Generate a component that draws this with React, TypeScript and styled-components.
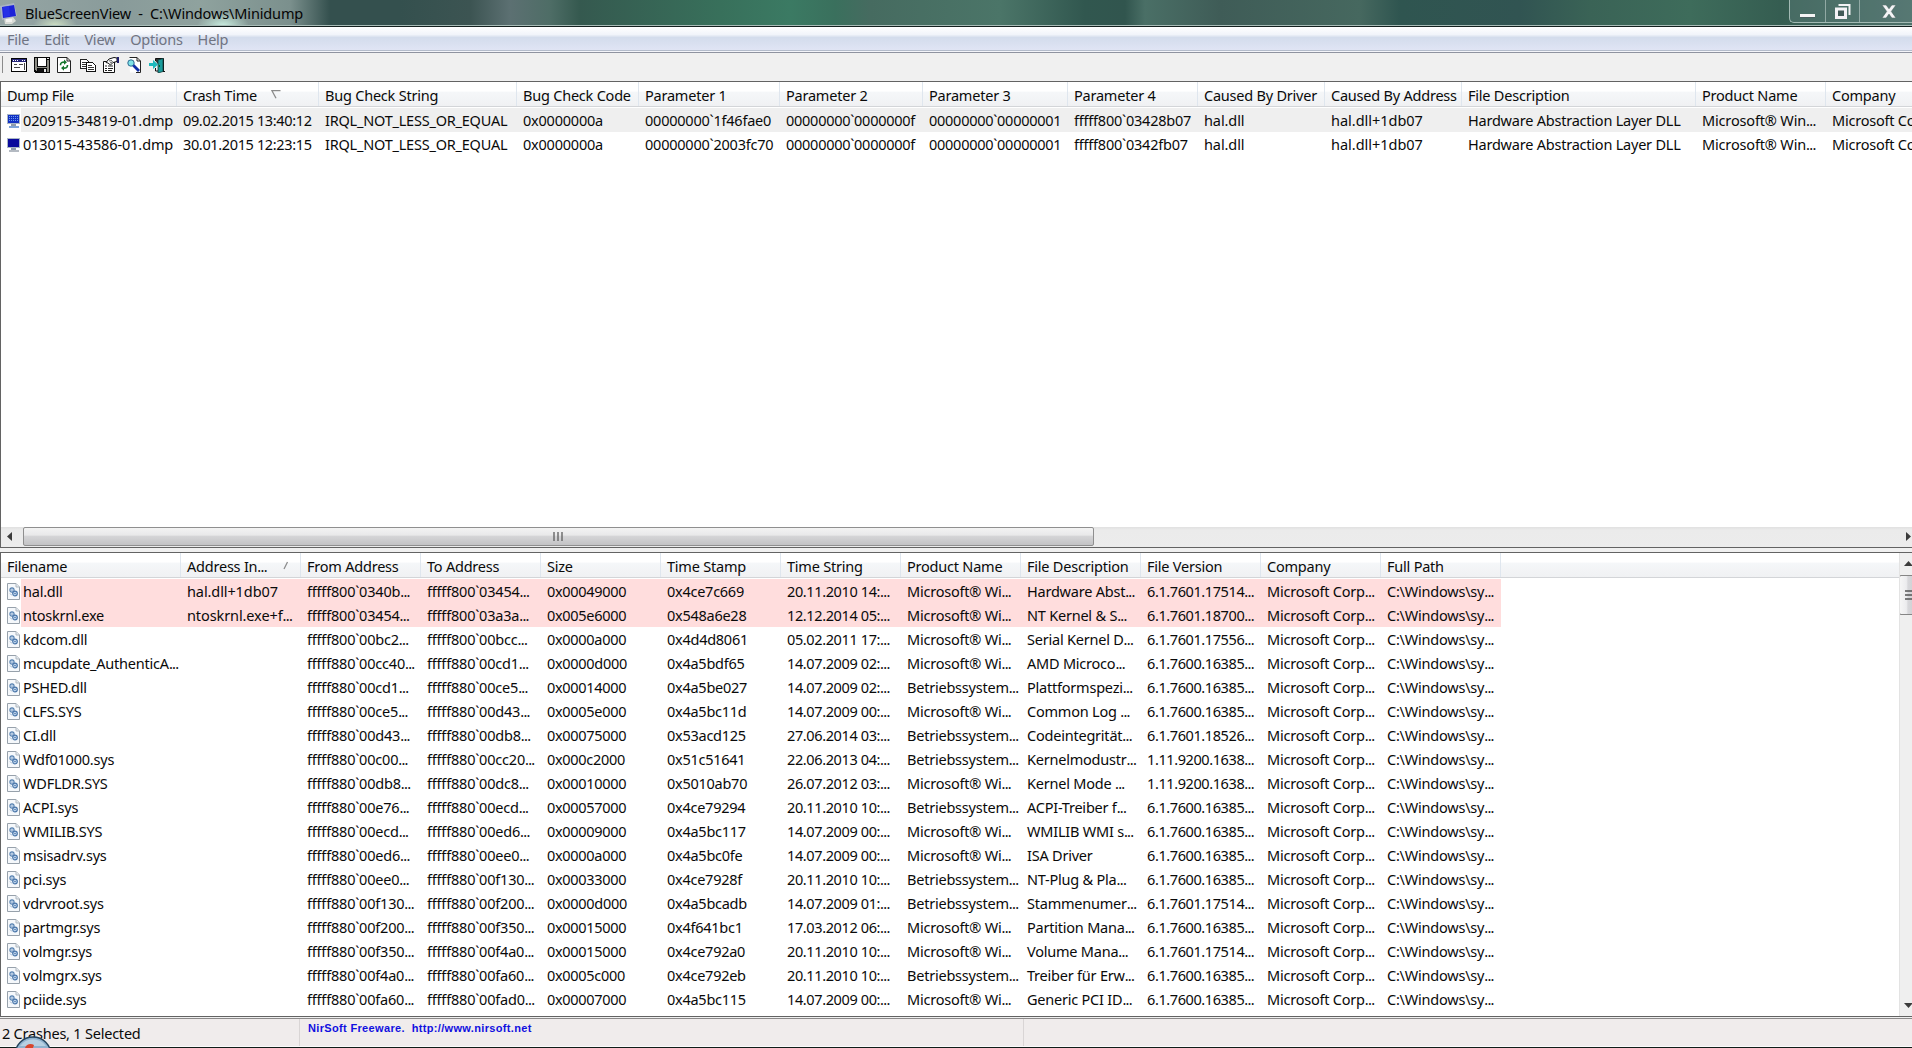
import React from "react";
import styled, { createGlobalStyle } from "styled-components";

const Global = createGlobalStyle`
  * { box-sizing: border-box; }
  html, body { margin: 0; padding: 0; overflow: hidden; background: #f0f0f0; }
`;

const Window = styled.div`
  position: relative;
  width: 1912px;
  height: 1048px;
  display: flex;
  flex-direction: column;
  overflow: hidden;
  background: #f0f0f0;
  color: #0a0a0a;
  font-family: "Noto Sans", "Open Sans", sans-serif;
  font-size: 14.5px;
  letter-spacing: -0.22px;
  white-space: pre;
`;

const TitleBar = styled.header`
  flex: none;
  height: 27px;
  display: flex;
  justify-content: space-between;
  border-bottom: 1px solid #14201f;
  box-shadow: inset 0 -1px 0 #a9bdb8;
  background:
    radial-gradient(ellipse 22px 12px at 55px 26px, rgba(222, 240, 205, 0.8), transparent),
    radial-gradient(ellipse 26px 14px at 223px 26px, rgba(205, 243, 228, 0.95), transparent),
    linear-gradient(90deg, #95a5a4 0, #899b9a 120px, #8fa29e 200px, #7b908d 290px, rgba(70, 95, 92, 0) 330px),
    linear-gradient(90deg, #34504e 0, #34504e 400px, #3c5452 470px, #5c7072 510px, #4e6d66 550px, #35594f 580px,
      #38705b 720px, #3b7a63 790px, #3a705d 835px, #466b60 870px, #4b7568 1000px, #31574f 1085px, #31554e 1125px,
      #4a6f66 1145px, #3f5c57 1220px, #46685f 1360px, #2f5550 1400px, #315452 1520px, #3a6356 1590px, #3e6c5b 1690px,
      #355d51 1780px, #4d7069 1912px);
`;

const TitleLeft = styled.div`
  display: flex;
  align-items: center;
  height: 26px;
`;

const TitleText = styled.h1`
  margin: 0 0 0 7px;
  font-size: 14.5px;
  font-weight: 400;
  line-height: 26px;
  letter-spacing: -0.14px;
  color: #050505;
`;

const Controls = styled.div`
  display: flex;
  width: 123px;
  height: 23px;
  border: 1px solid #a3bab4;
  border-width: 0 0 1px 1px;
  border-radius: 0 0 0 5px;
  background: rgba(110, 140, 138, 0.3);
`;

const Control = styled.button<{ $w: number }>`
  flex: none;
  width: ${(p) => p.$w}px;
  height: 22px;
  padding: 0;
  border: 0;
  border-right: 1px solid #91a9a4;
  background: transparent;
  display: flex;
  align-items: center;
  justify-content: center;
  &:last-child { border-right: 0; }
`;

const MenuBar = styled.nav`
  flex: none;
  height: 26px;
  display: flex;
  gap: 15px;
  padding-left: 7px;
  color: #707482;
  line-height: 24px;
  border-bottom: 1px solid #8f93a0;
  box-shadow: inset 0 -1px 0 #f4f5fa, inset 0 -2px 0 #b4bccb;
  background: linear-gradient(#fff 0, #f1f4fa 30%, #d3dcec 42%, #dfe4f4 88%, #e4e8f4 100%);
`;

const ToolBar = styled.div`
  flex: none;
  height: 28px;
  display: flex;
  align-items: flex-start;
  padding: 3px 0 0 2px;
`;

const Grip = styled.div`
  width: 1px;
  height: 17px;
  margin-right: 8px;
  background: #8b8b8b;
`;

const Tool = styled.div<{ $w: number }>`
  width: ${(p) => p.$w}px;
  height: 18px;
  display: flex;
  align-items: center;
`;

const Pane = styled.section<{ $h: number }>`
  flex: none;
  height: ${(p) => p.$h}px;
  display: flex;
  flex-direction: column;
  border: 1px solid #636363;
  border-right: 0;
  background: #fff;
  overflow: hidden;
`;

const PaneBody = styled.div`
  flex: 1;
  min-height: 0;
  display: flex;
`;

const List = styled.div`
  flex: 1;
  min-width: 0;
  overflow: hidden;
`;

const Row = styled.div<{ $bg?: string; $end?: number }>`
  width: ${(p) => (p.$end ? `${p.$end}px` : "2000px")};
  height: 24px;
  display: flex;
  background: ${(p) =>
    p.$bg ? `linear-gradient(90deg, #fff 20px, ${p.$bg} 20px)` : "transparent"};
`;

const HeaderRow = styled.div`
  width: 2000px;
  height: 25px;
  margin-bottom: 1px;
  display: flex;
  border-bottom: 1px solid #d3d5d8;
  background: linear-gradient(#fff 0, #fff 38%, #f5f7f9 42%, #f0f1f3 100%);
`;

const HeadCell = styled.div<{ $w: number }>`
  flex: none;
  width: ${(p) => p.$w}px;
  height: 24px;
  padding-left: 6px;
  display: flex;
  line-height: 27px;
  border-right: 1px solid #dfe6ee;
`;

const SortMark = styled.span<{ $gap: number }>`
  margin-left: ${(p) => p.$gap}px;
  display: flex;
  align-items: center;
`;

const Cell = styled.div<{ $w: number; $track?: number }>`
  flex: none;
  width: ${(p) => p.$w}px;
  padding-left: 6px;
  display: flex;
  align-items: center;
  gap: 2px;
  line-height: 24px;
  letter-spacing: ${(p) => p.$track ?? -0.22}px;
`;

const Dots = styled.span`
  letter-spacing: -0.7px;
`;

const IconSlot = styled.span<{ $drop: number }>`
  display: flex;
  padding-top: ${(p) => p.$drop}px;
`;

const HScroll = styled.div`
  flex: none;
  height: 20px;
  display: flex;
  align-items: flex-start;
  background: linear-gradient(#e0e0e0 0, #ebebeb 3px, #ececec 100%);
`;

const HArrow = styled.div<{ $w: number; $pad: number }>`
  width: ${(p) => p.$w}px;
  height: 18px;
  padding-left: ${(p) => p.$pad}px;
  display: flex;
  align-items: center;
`;

const HThumb = styled.div`
  width: 1071px;
  height: 19px;
  display: flex;
  align-items: center;
  justify-content: center;
  padding-right: 2px;
  border: 1px solid #8f8f8f;
  border-radius: 2px;
  background: linear-gradient(#f3f3f3 0, #e9e9ea 42%, #d5d5d7 48%, #c3c3c5 100%);
`;

const VScroll = styled.div`
  width: 13px;
  flex: none;
  display: flex;
  flex-direction: column;
  background: #efefef;
  border-left: 1px solid #e3e3e3;
  overflow: hidden;
`;

const VArrow = styled.div<{ $top: number }>`
  flex: none;
  padding: ${(p) => p.$top}px 0 0 4px;
  height: 22px;
  line-height: 0;
`;

const VThumb = styled.div`
  flex: none;
  height: 40px;
  width: 18px;
  margin-left: -1px;
  padding-left: 5px;
  display: flex;
  align-items: center;
  border: 1px solid #858585;
  border-radius: 2px;
  background: linear-gradient(90deg, #f6f6f6 0, #ececee 40%, #d7d7da 50%, #cfcfd3 100%);
`;

const Spring = styled.div`
  flex: 1;
`;

const Splitter = styled.div`
  flex: none;
  height: 4px;
  background: #f0f0f0;
`;

const StatusBar = styled.footer`
  flex: none;
  height: 29px;
  margin-top: 1px;
  display: flex;
  border-top: 1px solid #8c8a8a;
  border-bottom: 1px solid #fbfbfb;
  background: #f0ecec;
`;

const StatusPart = styled.div<{ $w: number; $top: number }>`
  width: ${(p) => p.$w}px;
  padding: ${(p) => p.$top}px 0 0 2px;
  line-height: 24px;
  border-right: 1px solid #d9d5d5;
`;

const Credit = styled.span`
  display: block;
  padding-left: 6px;
  font: 700 11px/11px "Liberation Sans", Arial, sans-serif;
  letter-spacing: 0.34px;
  color: #1010e0;
`;

const Desktop = styled.div`
  flex: none;
  height: 2px;
  border-top: 1px solid #101c18;
  background: linear-gradient(90deg, #86a296 73px, #f4fbf6 73px 230px, #7ba08e 230px 485px, #f1f6f2 485px 644px,
    #4c6358 644px 647px, #f1f6f2 647px 805px, #4c6358 805px 808px, #f1f6f2 808px 967px, #4c6358 967px 970px,
    #f1f6f2 970px 1127px, #86a99a 1127px 1912px);
`;

const StartOrb = styled.svg`
  position: absolute;
  left: 14px;
  top: 1036px;
`;

const P = (props: { d: string; c: string }) => <path d={props.d} fill={props.c} />;

const AppIcon = () => (
  <svg width="18" height="24" viewBox="0 0 18 24">
    <path d="M4 17l9-1 3 4-4 3H5z" fill="#d9dcd6" />
    <path d="M6 18h6v3H6z" fill="#f2f2ee" />
    <path d="M0 5l14-3 3 13-15 4z" fill="#aab4c8" />
    <path d="M2 6l12-2 2 11-13 2z" fill="#1c22d8" />
    <path d="M3 6l6-1 1 10-6 1z" fill="#2b3af2" opacity=".6" />
  </svg>
);

const MinimizeGlyph = () => (
  <svg width="15" height="18" viewBox="0 0 15 18">
    <P d="M0 12h15v4H0z" c="#4a5f60" />
    <P d="M0 12h15v3H0z" c="#f4f4f4" />
  </svg>
);
const RestoreGlyph = () => (
  <svg width="17" height="17" viewBox="0 0 17 17">
    <path d="M4.500 2h11v10" fill="none" stroke="#f2f2f4" strokeWidth="2" />
    <path d="M2.500 6h9v8.500h-9z" fill="#425a58" stroke="#f4f2f6" strokeWidth="3" />
  </svg>
);
const CloseGlyph = () => (
  <svg width="14" height="13" viewBox="0 0 14 13">
    <path d="M0 0h4.200L7 3.800 9.800 0H14L9.300 6.400 14 13H9.800L7 9.100 4.200 13H0l4.700-6.600z" fill="#f4f4f6" stroke="#445856" strokeWidth=".5" />
  </svg>
);

const WindowIcon = () => (
  <svg width="16" height="16" viewBox="0 0 16 16" shapeRendering="crispEdges">
    <P d="M0 1h16v14H0z" c="#050505" />
    <P d="M1 2h14v3H1z" c="#26267a" />
    <P d="M2 3h1v1H2zM4 3h1v1H4zM6 3h1v1H6zM11 3h1v1h-1zM13 3h1v1h-1z" c="#fff" />
    <P d="M1 5h14v9H1z" c="#fff" />
    <P d="M3 7h3v1H3zM8 7h4v1H8zM3 10h6v1H3zM13 6h1v7h-1z" c="#444" />
  </svg>
);
const SaveIcon = () => (
  <svg width="16" height="16" viewBox="0 0 16 16" shapeRendering="crispEdges">
    <P d="M0 0h16v16H1l-1-1z" c="#080808" />
    <P d="M1 1h2v13H2l-1-1zM13 3h2v12h-2z" c="#8c8c84" />
    <P d="M4 1h8v8H4z" c="#fff" />
    <P d="M3 10h10v1H3z" c="#8c8c84" />
    <P d="M4 12h5v3H4z" c="#111" />
    <P d="M10 12h2v3h-2zM13 1h2v1h-2z" c="#e8e8e8" />
  </svg>
);
const RefreshIcon = () => (
  <svg width="14" height="16" viewBox="0 0 14 16">
    <path d="M.5.5h9.500l3.500 3.500v11.500H.5z" fill="#fff" stroke="#222" />
    <path d="M10 .5V4h3.500" fill="none" stroke="#222" />
    <path d="M3.500 8.200C3.400 5.600 5 5 8 5.200M10.500 8c.1 2.700-1.500 3.300-4.500 3.100" fill="none" stroke="#14762c" strokeWidth="1.600" />
    <path d="M7 2.500l3 2.700-3 2.600zM7 8.500l-3 2.600 3 2.700z" fill="#14762c" />
  </svg>
);
const CopyIcon = () => (
  <svg width="16" height="16" viewBox="0 0 16 16" shapeRendering="crispEdges">
    <path d="M.5 2.500h6l2 2v7h-8z" fill="#fff" stroke="#222" />
    <P d="M2 5h4v1H2zM2 7h5v1H2zM2 9h5v1H2z" c="#333" />
    <path d="M6.500 5.500h6l2.500 2.500v6.500h-8.500z" fill="#fff" stroke="#111" />
    <P d="M8 8h4v1H8zM8 10h6v1H8zM8 12h6v1H8z" c="#333" />
  </svg>
);
const PropertiesIcon = () => (
  <svg width="16" height="16" viewBox="0 0 16 16">
    <path d="M.5 4.500h11v11H.5z" fill="#fff" stroke="#111" />
    <path d="M2 9h2M5 9h5M2 11.500h2M5 11.500h5M2 13.500h2M5 13.500h4" stroke="#222" />
    <path d="M3 5.500l3-3.500 5-1.500 3 .5v3.500l-4 1-2.500 2.500L5 6z" fill="#fff" stroke="#111" />
    <path d="M6 4l3-.5M7 6l3-1.500" stroke="#333" strokeWidth=".8" />
    <path d="M14 0h2v6h-2z" fill="#20206e" />
  </svg>
);
const FindIcon = () => (
  <svg width="15" height="16" viewBox="0 0 15 16">
    <path d="M2 .5h8.500l3.500 3.500v11.500H3" fill="#fff" />
    <path d="M2.500.5h7.500l3.500 3.500v11.500H9" fill="none" stroke="#222" />
    <path d="M10 .5V4h3.500" fill="none" stroke="#222" />
    <circle cx="4" cy="6" r="3.200" fill="#7fe3e8" stroke="#2c6890" />
    <path d="M6.300 8.300l5.700 5.700" stroke="#0f2fa8" strokeWidth="2.800" />
  </svg>
);
const ExitIcon = () => (
  <svg width="16" height="16" viewBox="0 0 16 16">
    <path d="M6.500 4V1.500h8V14" fill="#333" stroke="#111" />
    <path d="M9 3l5-1.500v13L9 16z" fill="#1a9c9c" stroke="#0c3c3c" strokeWidth=".8" />
    <path d="M10.500 8v2" stroke="#062" />
    <path d="M0 6h4V3l5 4.500L4 12V9H0z" fill="#1fb8bc" />
    <path d="M6.500 11v3H9M14 14.500h2" fill="none" stroke="#111" />
  </svg>
);

const DumpIcon = ({ selected }: { selected?: boolean }) => (
  <svg width="14" height="14" viewBox="0 0 14 14" shapeRendering="crispEdges">
    <P d="M0 0h13v10H0z" c="#a9b6c6" />
    <P d="M1 1h11v8H1z" c={selected ? "#1230c4" : "#0a0a9c"} />
    {selected && (
      <P d="M2 2h1v1H2zM4 2h1v1H4zM6 2h1v1H6zM8 2h1v1H8zM10 2h1v1h-1zM2 4h1v1H2zM4 4h1v1H4zM6 4h1v1H6zM8 4h1v1H8zM10 4h1v1h-1zM2 6h1v1H2zM4 6h1v1H4zM6 6h1v1H6zM8 6h1v1H8zM10 6h1v1h-1z" c="#6c9cf0" />
    )}
    <P d="M4 10h5v2H4z" c="#8e9bab" />
    <P d="M2 12h10v2H2z" c={selected ? "#7fa4d6" : "#b4bac2"} />
  </svg>
);

const FileIcon = () => (
  <svg width="14" height="17" viewBox="0 0 14 17">
    <path d="M.5.5h8.500l3.500 3.500v12.500H.5z" fill="#f5f8fb" stroke="#97a1ab" />
    <path d="M9 .5V4h3.500" fill="#e4eaef" stroke="#b0b8c0" />
    <circle cx="5" cy="7" r="2.100" fill="#d5e4f4" stroke="#5580b0" strokeWidth="1.100" />
    <circle cx="8" cy="10.500" r="2.300" fill="#c5daf0" stroke="#4a77aa" strokeWidth="1.200" />
    <circle cx="5" cy="7" r=".6" fill="#39669c" />
    <circle cx="8" cy="10.500" r=".7" fill="#2f5e98" />
    <path d="M3 10.500l2 2" stroke="#9db6d2" />
  </svg>
);

const Triangle = ({ dir }: { dir: "left" | "right" | "up" | "down" }) => {
  const d = { left: "M6 0v9L1 4.500z", right: "M1 0v9l5-4.500z", up: "M0 6h9L4.500 1z", down: "M0 1h9L4.500 6z" }[dir];
  const flat = dir === "up" || dir === "down";
  return (
    <svg width={flat ? 9 : 7} height={flat ? 7 : 9}>
      <path d={d} fill="#3c3c3c" />
    </svg>
  );
};

/* List text whose trailing ellipsis is set tighter than the words before it. */
const Clipped = ({ text }: { text: string }) =>
  text.endsWith("...") ? (
    <span>
      {text.slice(0, -3)}
      <Dots>...</Dots>
    </span>
  ) : (
    <span>{text}</span>
  );

type Column = [title: string, width: number, track?: number];

const crashColumns: Column[] = [
  ["Dump File", 176, -0.12], ["Crash Time", 142, -0.36], ["Bug Check String", 198], ["Bug Check Code", 122],
  ["Parameter 1", 141], ["Parameter 2", 143, -0.26], ["Parameter 3", 145, -0.26], ["Parameter 4", 130],
  ["Caused By Driver", 127, -0.1], ["Caused By Address", 137, -0.02], ["File Description", 234],
  ["Product Name", 130, -0.16], ["Company", 200],
];

const crashes = [
  "020915-34819-01.dmp|09.02.2015 13:40:12|IRQL_NOT_LESS_OR_EQUAL|0x0000000a|00000000`1f46fae0|00000000`0000000f|00000000`00000001|fffff800`03428b07|hal.dll|hal.dll+1db07|Hardware Abstraction Layer DLL|Microsoft® Win...|Microsoft Corporation",
  "013015-43586-01.dmp|30.01.2015 12:23:15|IRQL_NOT_LESS_OR_EQUAL|0x0000000a|00000000`2003fc70|00000000`0000000f|00000000`00000001|fffff800`0342fb07|hal.dll|hal.dll+1db07|Hardware Abstraction Layer DLL|Microsoft® Win...|Microsoft Corporation",
].map((r) => r.split("|"));

const moduleColumns: Column[] = [
  ["Filename", 180], ["Address In...", 120, -0.1], ["From Address", 120, -0.2], ["To Address", 120, -0.2],
  ["Size", 120, -0.3], ["Time Stamp", 120, -0.26], ["Time String", 120, -0.38], ["Product Name", 120],
  ["File Description", 120], ["File Version", 120, -0.4], ["Company", 120], ["Full Path", 120],
];

const modules = [
  "hal.dll|hal.dll+1db07|fffff800`0340b...|fffff800`03454...|0x00049000|0x4ce7c669|20.11.2010 14:...|M|Hardware Abst...|6.1.7601.17514...",
  "ntoskrnl.exe|ntoskrnl.exe+f...|fffff800`03454...|fffff800`03a3a...|0x005e6000|0x548a6e28|12.12.2014 05:...|M|NT Kernel & S...|6.1.7601.18700...",
  "kdcom.dll||fffff800`00bc2...|fffff800`00bcc...|0x0000a000|0x4d4d8061|05.02.2011 17:...|M|Serial Kernel D...|6.1.7601.17556...",
  "mcupdate_AuthenticA...||fffff880`00cc40...|fffff880`00cd1...|0x0000d000|0x4a5bdf65|14.07.2009 02:...|M|AMD Microco...|6.1.7600.16385...",
  "PSHED.dll||fffff880`00cd1...|fffff880`00ce5...|0x00014000|0x4a5be027|14.07.2009 02:...|B|Plattformspezi...|6.1.7600.16385...",
  "CLFS.SYS||fffff880`00ce5...|fffff880`00d43...|0x0005e000|0x4a5bc11d|14.07.2009 00:...|M|Common Log ...|6.1.7600.16385...",
  "CI.dll||fffff880`00d43...|fffff880`00db8...|0x00075000|0x53acd125|27.06.2014 03:...|B|Codeintegrität...|6.1.7601.18526...",
  "Wdf01000.sys||fffff880`00c00...|fffff880`00cc20...|0x000c2000|0x51c51641|22.06.2013 04:...|B|Kernelmodustr...|1.11.9200.1638...",
  "WDFLDR.SYS||fffff880`00db8...|fffff880`00dc8...|0x00010000|0x5010ab70|26.07.2012 03:...|M|Kernel Mode ...|1.11.9200.1638...",
  "ACPI.sys||fffff880`00e76...|fffff880`00ecd...|0x00057000|0x4ce79294|20.11.2010 10:...|B|ACPI-Treiber f...|6.1.7600.16385...",
  "WMILIB.SYS||fffff880`00ecd...|fffff880`00ed6...|0x00009000|0x4a5bc117|14.07.2009 00:...|M|WMILIB WMI s...|6.1.7600.16385...",
  "msisadrv.sys||fffff880`00ed6...|fffff880`00ee0...|0x0000a000|0x4a5bc0fe|14.07.2009 00:...|M|ISA Driver|6.1.7600.16385...",
  "pci.sys||fffff880`00ee0...|fffff880`00f130...|0x00033000|0x4ce7928f|20.11.2010 10:...|B|NT-Plug & Pla...|6.1.7600.16385...",
  "vdrvroot.sys||fffff880`00f130...|fffff880`00f200...|0x0000d000|0x4a5bcadb|14.07.2009 01:...|B|Stammenumer...|6.1.7601.17514...",
  "partmgr.sys||fffff880`00f200...|fffff880`00f350...|0x00015000|0x4f641bc1|17.03.2012 06:...|M|Partition Mana...|6.1.7600.16385...",
  "volmgr.sys||fffff880`00f350...|fffff880`00f4a0...|0x00015000|0x4ce792a0|20.11.2010 10:...|M|Volume Mana...|6.1.7601.17514...",
  "volmgrx.sys||fffff880`00f4a0...|fffff880`00fa60...|0x0005c000|0x4ce792eb|20.11.2010 10:...|B|Treiber für Erw...|6.1.7600.16385...",
  "pciide.sys||fffff880`00fa60...|fffff880`00fad0...|0x00007000|0x4a5bc115|14.07.2009 00:...|M|Generic PCI ID...|6.1.7600.16385...",
].map((r) => {
  const cells = r.split("|");
  cells[7] = cells[7] === "M" ? "Microsoft® Wi..." : "Betriebssystem...";
  return [...cells, "Microsoft Corp...", "C:\\Windows\\sy..."];
});

export default function App() {
  return (
    <Window>
      <Global />
      <TitleBar>
        <TitleLeft>
          <AppIcon />
          <TitleText>{"BlueScreenView  -  C:\\Windows\\Minidump"}</TitleText>
        </TitleLeft>
        <Controls>
          <Control $w={36}><MinimizeGlyph /></Control>
          <Control $w={34}><RestoreGlyph /></Control>
          <Control $w={58}><CloseGlyph /></Control>
        </Controls>
      </TitleBar>
      <MenuBar>
        {["File", "Edit", "View", "Options", "Help"].map((m) => <span key={m}>{m}</span>)}
      </MenuBar>
      <ToolBar>
        <Grip />
        <Tool $w={23}><WindowIcon /></Tool>
        <Tool $w={23}><SaveIcon /></Tool>
        <Tool $w={23}><RefreshIcon /></Tool>
        <Tool $w={23}><CopyIcon /></Tool>
        <Tool $w={24}><PropertiesIcon /></Tool>
        <Tool $w={22}><FindIcon /></Tool>
        <Tool $w={22}><ExitIcon /></Tool>
      </ToolBar>

      <Pane $h={467}>
        <PaneBody>
          <List>
            <HeaderRow>
              {crashColumns.map(([title, w]) => (
                <HeadCell key={title} $w={w}>
                  {title}
                  {title === "Crash Time" && (
                    <SortMark $gap={14}>
                      <svg width="10" height="9"><path d="M9.500 .7H1l4 7.500" fill="none" stroke="#8b8b8b" strokeWidth="1.300" /></svg>
                    </SortMark>
                  )}
                </HeadCell>
              ))}
            </HeaderRow>
            {crashes.map((cells, r) => (
              <Row key={r} $bg={r === 0 ? "#efefef" : undefined}>
                {cells.map((text, c) => (
                  <Cell key={c} $w={crashColumns[c][1]} $track={crashColumns[c][2]}>
                    {c === 0 && <IconSlot $drop={2}><DumpIcon selected={r === 0} /></IconSlot>}
                    <Clipped text={text} />
                  </Cell>
                ))}
              </Row>
            ))}
          </List>
        </PaneBody>
        <HScroll>
          <HArrow $w={22} $pad={5}><Triangle dir="left" /></HArrow>
          <HThumb>
            <svg width="10" height="9"><path d="M1 0v9M5 0v9M9 0v9" stroke="#5d5d5d" strokeWidth="1.300" /></svg>
          </HThumb>
          <Spring />
          <HArrow $w={7} $pad={0}><Triangle dir="right" /></HArrow>
        </HScroll>
      </Pane>

      <Splitter />

      <Pane $h={465}>
        <PaneBody>
          <List>
            <HeaderRow>
              {moduleColumns.map(([title, w]) => (
                <HeadCell key={title} $w={w}>
                  <Clipped text={title} />
                  {title === "Address In..." && (
                    <SortMark $gap={16}>
                      <svg width="6" height="9"><path d="M1 8l3.500-7" stroke="#8b8b8b" strokeWidth="1.300" /></svg>
                    </SortMark>
                  )}
                </HeadCell>
              ))}
            </HeaderRow>
            {modules.map((cells, r) => (
              <Row key={r} $bg={r < 2 ? "#ffdddd" : undefined} $end={1500}>
                {cells.map((text, c) => (
                  <Cell key={c} $w={moduleColumns[c][1]} $track={moduleColumns[c][2]}>
                    {c === 0 && <IconSlot $drop={0}><FileIcon /></IconSlot>}
                    <Clipped text={text} />
                  </Cell>
                ))}
              </Row>
            ))}
          </List>
          <VScroll>
            <VArrow $top={7}><Triangle dir="up" /></VArrow>
            <VThumb>
              <svg width="12" height="10"><path d="M0 1h12M0 5h12M0 9h12" stroke="#555" strokeWidth="1.300" /></svg>
            </VThumb>
            <Spring />
            <VArrow $top={8}><Triangle dir="down" /></VArrow>
          </VScroll>
        </PaneBody>
      </Pane>

      <StatusBar>
        <StatusPart $w={300} $top={2}>2 Crashes, 1 Selected</StatusPart>
        <StatusPart $w={724} $top={4}><Credit>{"NirSoft Freeware.  http://www.nirsoft.net"}</Credit></StatusPart>
      </StatusBar>
      <Desktop />
      <StartOrb width="38" height="12" viewBox="0 0 38 12">
        <circle cx="19" cy="19" r="18" fill="#8fb2cf" stroke="#24435c" strokeWidth="1.400" />
        <path d="M6 10a16 16 0 0 1 26 0z" fill="#b8d0e2" />
        <path d="M11 12c1-4 6-5 9-3l-1 3z" fill="#d8452c" />
      </StartOrb>
    </Window>
  );
}
